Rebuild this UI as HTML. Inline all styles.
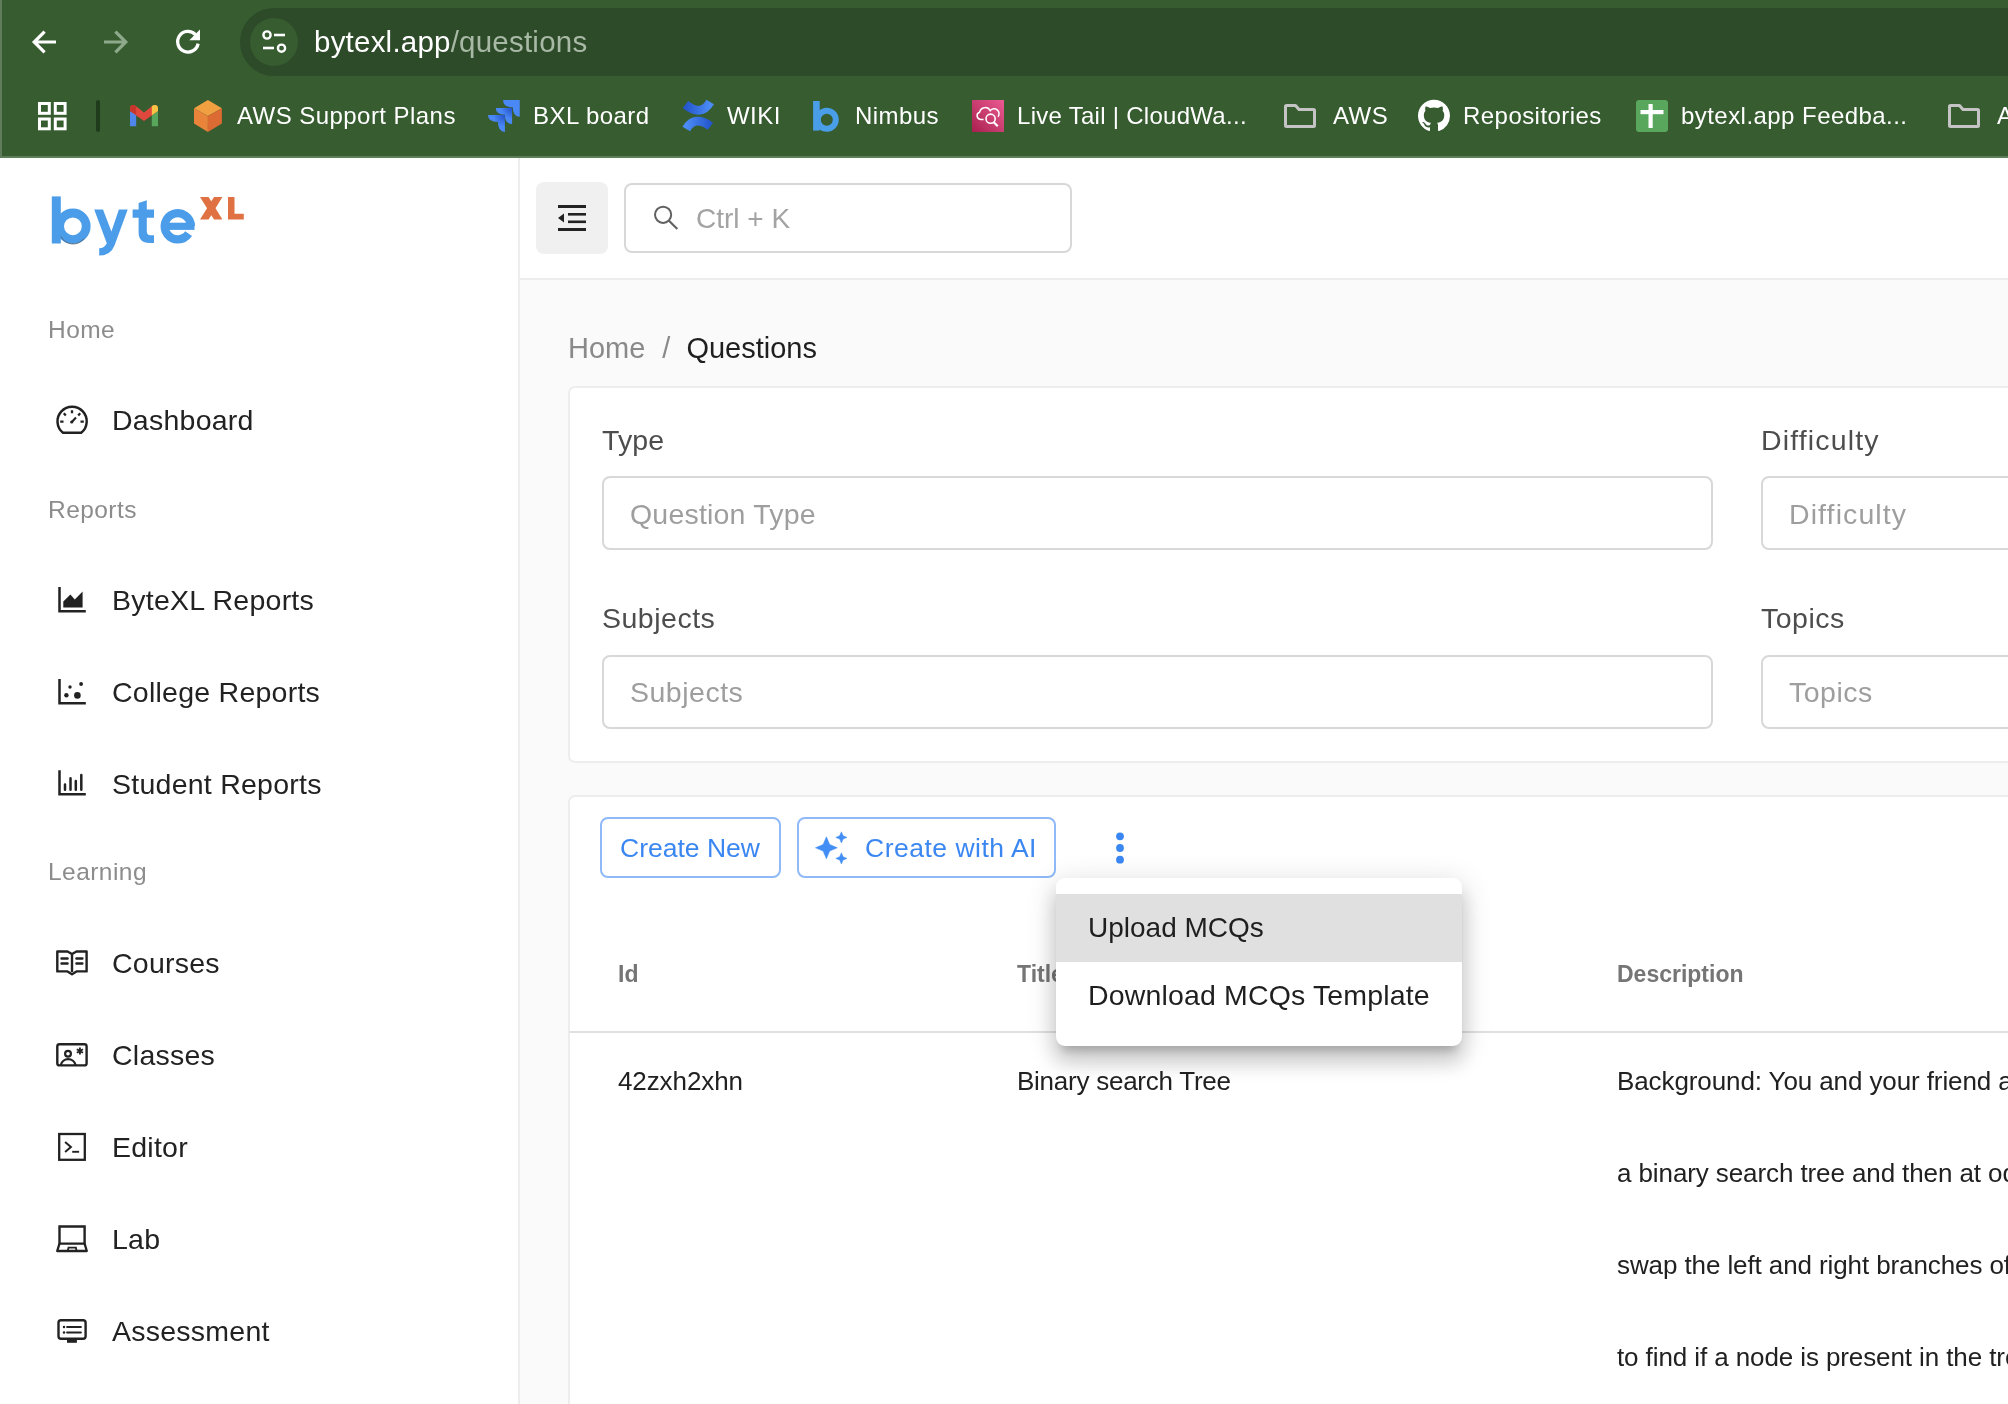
<!DOCTYPE html>
<html><head><meta charset="utf-8">
<style>
html,body{margin:0;padding:0;width:2008px;height:1404px;overflow:hidden;background:#fafafa;font-family:"Liberation Sans",sans-serif;}
.a{position:absolute;}
.t{position:absolute;line-height:1;white-space:nowrap;will-change:transform;}
#chrome{position:absolute;left:0;top:0;width:2008px;height:158px;background:#365c30;}
#chromeline{position:absolute;left:0;top:156px;width:2008px;height:2px;background:#5e7d59;}
#pill{position:absolute;left:240px;top:8px;width:1900px;height:68px;border-radius:34px;background:#2d4a29;}
#siteinfo{position:absolute;left:250px;top:18px;width:48px;height:48px;border-radius:24px;background:#365c30;}
.bm{color:#fff;font-size:24px;letter-spacing:0.45px;}
#sidebar{position:absolute;left:0;top:158px;width:518px;height:1246px;background:#fff;border-right:2px solid #ededed;}
#header{position:absolute;left:520px;top:158px;width:1488px;height:120px;background:#fff;border-bottom:2px solid #ededed;}
.sec{color:#8c8c8c;font-size:24.5px;letter-spacing:0.45px;}
.nav{color:#222;font-size:28.5px;letter-spacing:0.25px;}
.card{position:absolute;background:#fff;border:2px solid #ededed;border-radius:7px;box-sizing:border-box;}
.inp{position:absolute;background:#fff;border:2px solid #d8d8d8;border-radius:8px;box-sizing:border-box;}
.lbl{color:#4d4d4d;font-size:28.5px;letter-spacing:0.5px;}
.ph{color:#9e9e9e;font-size:28.5px;letter-spacing:0.5px;}
.btn{position:absolute;border:2px solid #8fbaf7;border-radius:8px;box-sizing:border-box;background:#fff;}
.btxt{color:#3b87f2;font-size:26.5px;}
.th{color:#757575;font-size:23px;font-weight:700;}
.td{color:#212121;font-size:26px;letter-spacing:-0.1px;}
</style></head><body>

<!-- browser chrome -->
<div id="chrome"></div>
<div id="chromeline"></div><div class="a" style="left:0;top:0;width:2px;height:158px;background:#5f7d5a;"></div>
<div id="pill"></div>
<div id="siteinfo"></div>

<svg class="a" style="left:0;top:0" width="2008" height="157" viewBox="0 0 2008 157">
  <!-- back -->
  <path d="M44.6 31.6 L34.2 42 L44.6 52.4 M35 42 H56" fill="none" stroke="#fff" stroke-width="3.2" stroke-linecap="butt" stroke-linejoin="miter"/>
  <!-- forward -->
  <path d="M115.4 31.6 L125.8 42 L115.4 52.4 M125 42 H104" fill="none" stroke="#8fa98b" stroke-width="3.2" stroke-linecap="butt" stroke-linejoin="miter"/>
  <!-- reload -->
  <path d="M195.4 34.6 A10.3 10.3 0 1 0 198.1 43.6" fill="none" stroke="#fff" stroke-width="3.3"/>
  <path d="M200 29.5 V40.2 H189.3 Z" fill="#fff"/>
  <!-- tune icon -->
  <circle cx="267" cy="35" r="3.6" fill="none" stroke="#fff" stroke-width="2.4"/>
  <path d="M274 35 H285" stroke="#fff" stroke-width="2.6"/>
  <path d="M263 48 H274" stroke="#fff" stroke-width="2.6"/>
  <circle cx="281.5" cy="48.2" r="3.6" fill="none" stroke="#fff" stroke-width="2.4"/>
  <!-- apps grid -->
  <g fill="none" stroke="#fff" stroke-width="3">
    <rect x="39.5" y="103.5" width="9.8" height="9.8"/>
    <rect x="55.3" y="103.5" width="9.8" height="9.8"/>
    <rect x="39.5" y="119" width="9.8" height="9.8"/>
    <rect x="55.3" y="119" width="9.8" height="9.8"/>
  </g>
  <!-- separator -->
  <rect x="96" y="100" width="4" height="32" rx="2" fill="#1f3b1c"/>
  <!-- gmail -->
  <g>
    <path d="M130 111 V126.2 H136.2 V114.5 Z" fill="#4f86ec"/>
    <path d="M151.8 114.5 V126.2 H158 V111 Z" fill="#58a55c"/>
    <path d="M130 108.5 Q130 105 133 105 Q135 105 136.5 106.5 L144 112.5 L151.5 106.5 Q153 105 155 105 Q158 105 158 108.5 V111 L144 121 L130 111 Z" fill="#e0483e"/>
    <path d="M130 108.5 Q130 105 133 105 Q135 105 136.2 106.3 V115 L130 111 Z" fill="#c5372c"/>
    <path d="M151.8 106.3 Q153 105 155 105 Q158 105 158 108.5 V111 L151.8 115.2 Z" fill="#f6c443"/>
  </g>
  <!-- aws cube -->
  <path d="M207.9 100 L221.9 108.2 L207.9 116 L194 108.2 Z" fill="#f0a041"/>
  <path d="M194 108.2 L207.9 116 V132 L194 123.5 Z" fill="#e9843a"/>
  <path d="M221.9 108.2 V123.5 L207.9 132 V116 Z" fill="#dc6a33"/>
  <!-- jira -->
  <defs>
    <radialGradient id="jg" cx="1" cy="0" r="1"><stop offset="0" stop-color="#2150c8"/><stop offset="0.7" stop-color="#4a88f5"/></radialGradient>
    <linearGradient id="cg" x1="0" y1="0" x2="1" y2="0"><stop offset="0" stop-color="#2456cc"/><stop offset="1" stop-color="#4b8cf6"/></linearGradient>
    <linearGradient id="cg2" x1="1" y1="0" x2="0" y2="0"><stop offset="0" stop-color="#2456cc"/><stop offset="1" stop-color="#4b8cf6"/></linearGradient>
    <linearGradient id="lt" x1="0" y1="1" x2="1" y2="0"><stop offset="0" stop-color="#a8214f"/><stop offset="1" stop-color="#ec5a92"/></linearGradient>
  </defs>
  <path d="M503.1 100 H519.75 V116.8 Q512.8 116.8 512.8 107.25 Q503.1 107.25 503.1 100 Z" fill="#4a88f5"/>
  <path d="M495.8 108 H512.1 V124.1 Q504.9 124.1 504.9 114.8 Q495.8 114.8 495.8 108 Z" fill="url(#jg)"/>
  <path d="M488 115.1 H504.9 V131.9 Q498 131.9 498 122.1 Q488 122.1 488 115.1 Z" fill="url(#jg)"/>
  <!-- confluence -->
  <path d="M685.5 104.5 Q701 117.2 710.2 102" fill="none" stroke="url(#cg)" stroke-width="8.8"/>
  <path d="M686.3 129 Q694.6 114.7 710.5 126.2" fill="none" stroke="url(#cg2)" stroke-width="8.8"/>
  <!-- nimbus b -->
  <rect x="813.1" y="101" width="6.6" height="29.6" fill="#4a9ee8"/>
  <circle cx="826.8" cy="119.7" r="9" fill="none" stroke="#4a9ee8" stroke-width="6"/>
  <!-- live tail -->
  <rect x="972" y="100" width="32" height="32" fill="url(#lt)"/>
  <path d="M983.6 119.4 H980.6 A3.7 3.7 0 0 1 979.6 112.2 A5.7 5.7 0 0 1 990.2 110.6 A4.4 4.4 0 0 1 998 116.8" fill="none" stroke="#fff" stroke-width="1.5"/>
  <circle cx="990.6" cy="118.7" r="4.6" fill="none" stroke="#fff" stroke-width="1.6"/>
  <path d="M993.8 122.3 L997.8 126.3" stroke="#fff" stroke-width="2.2"/>
  <!-- folder -->
  <path d="M1285.5 106.5 Q1285.5 105.5 1286.5 105.5 H1295.5 L1299 109.5 H1313.5 Q1314.5 109.5 1314.5 110.5 V125.5 Q1314.5 126.5 1313.5 126.5 H1286.5 Q1285.5 126.5 1285.5 125.5 Z" fill="none" stroke="#c4c4c4" stroke-width="3" stroke-linejoin="round"/>
  <!-- github -->
  <g transform="translate(1418,99.8) scale(2)"><path fill="#fff" d="M8 0C3.58 0 0 3.58 0 8c0 3.54 2.29 6.53 5.47 7.59.4.07.55-.17.55-.38 0-.19-.01-.82-.01-1.49-2.01.37-2.530-.49-2.69-.94-.09-.23-.48-.94-.82-1.130-.28-.15-.68-.52-.01-.53.63-.01 1.08.58 1.23.82.72 1.21 1.870.87 2.33.66.07-.52.28-.87.51-1.07-1.78-.2-3.64-.89-3.64-3.95 0-.87.31-1.59.82-2.15-.08-.2-.36-1.02.08-2.12 0 0 .67-.21 2.2.82.64-.18 1.32-.27 2-.27.68 0 1.36.09 2 .27 1.53-1.04 2.2-.82 2.2-.82.44 1.1.16 1.92.08 2.12.51.56.82 1.27.82 2.15 0 3.07-1.87 3.75-3.65 3.95.29.25.54.73.54 1.48 0 1.07-.01 1.930-.01 2.2 0 .21.15.46.55.38A8.013 8.013 0 0016 8c0-4.42-3.58-8-8-8z"/></g>
  <!-- feedback -->
  <rect x="1636" y="100" width="32" height="32" rx="3" fill="#58a75d"/>
  <rect x="1640.5" y="110" width="23" height="4.2" fill="#fff"/>
  <rect x="1648.5" y="104" width="4.2" height="24" fill="#fff"/>
  <!-- folder 2 -->
  <path d="M1949.5 106.5 Q1949.5 105.5 1950.5 105.5 H1959.5 L1963 109.5 H1977.5 Q1978.5 109.5 1978.5 110.5 V125.5 Q1978.5 126.5 1977.5 126.5 H1950.5 Q1949.5 126.5 1949.5 125.5 Z" fill="none" stroke="#c4c4c4" stroke-width="3" stroke-linejoin="round"/>
</svg>
<div class="t" style="left:314px;top:27px;font-size:29.5px;letter-spacing:0.22px;color:#fff;">bytexl.app<span style="color:#a8b9a5">/questions</span></div>

<div class="t bm" style="left:236.5px;top:104px;">AWS Support Plans</div>
<div class="t bm" style="left:532.5px;top:104px;">BXL board</div>
<div class="t bm" style="left:726.5px;top:104px;">WIKI</div>
<div class="t bm" style="left:854.5px;top:104px;">Nimbus</div>
<div class="t bm" style="left:1016.5px;top:104px;letter-spacing:0.28px;">Live Tail | CloudWa...</div>
<div class="t bm" style="left:1332.5px;top:104px;">AWS</div>
<div class="t bm" style="left:1462.5px;top:104px;">Repositories</div>
<div class="t bm" style="left:1680.5px;top:104px;">bytexl.app Feedba...</div>
<div class="t bm" style="left:1996.5px;top:104px;">AWS</div>

<!-- sidebar -->
<div id="sidebar"></div>
<div id="header"></div>


<svg class="a" style="left:0;top:157px" width="520" height="1247" viewBox="0 157 520 1247">
  <!-- logo -->
  <g fill="#4b9de9">
    <rect x="51.8" y="196.4" width="9" height="47.1"/>
    <path d="M94.2 209.6 H103 L111.4 231.5 L118.9 209.6 H127.7 L114.5 245.5 Q110.6 255.6 99.2 255.6 V248.2 Q104.6 248.2 106.8 243.2 Z"/>
    <path d="M138.6 203 L146.8 200.3 V209.6 H154 V217.8 H146.8 V231 Q146.8 235.3 150.5 235.3 H154 V243 H149.5 Q138.6 243 138.6 232 V217.8 H132.6 V209.6 H138.6 Z"/>
    <rect x="161.2" y="222.7" width="33.3" height="7.2"/>
  </g>
  <circle cx="72.9" cy="226.3" r="13.3" fill="none" stroke="#4b9de9" stroke-width="8.8"/>
  <path d="M61 236.5 A13.5 13.5 0 0 0 84 238.5" fill="none" stroke="#555" stroke-width="0.9" opacity="0.8"/>
  <path d="M190.9 226.1 A13.1 13.1 0 1 0 188.6 233.7" fill="none" stroke="#4b9de9" stroke-width="8.3"/>
  <g fill="#e07142">
    <path d="M200 197 H208.6 L222.4 219.4 H214 Z"/>
    <path d="M214 197 H222.4 L208.6 219.4 H200 Z"/>
    <path d="M228 197 H234.5 V213.8 H243.8 V219.4 H228 Z"/>
  </g>
  <g fill="none" stroke="#222" stroke-width="2.5">
    <!-- dashboard -->
    <path d="M63 432.8 A14.6 14.6 0 1 1 81.2 432.8 Z" stroke-linejoin="round"/>
    <path d="M72 410.2 V413.3 M60.2 421.6 H63.5 M80.5 421.6 H83.8 M63.8 413.3 L65.8 415.5 M80.2 413.3 L78.2 415.5" stroke-width="2.3"/>
    <path d="M71.8 421.9 L76 417.6" stroke-width="2.2"/>
    <circle cx="71.7" cy="422" r="1.6" fill="#222" stroke="none"/>
    <!-- bytexl area -->
    <path d="M59.5 587 V611.2 H85.8"/>
    <!-- college -->
    <path d="M59.5 679 V703.2 H85.8"/>
    <!-- student -->
    <path d="M59.5 770.3 V794.3 H85.8"/>
    <path d="M65 784.5 V789.8 M70.5 778.2 V789.8 M75.8 781.1 V789.8 M81.3 775.1 V789.8" stroke-width="2.5" stroke-linecap="round"/>
    <!-- courses -->
    <path d="M57.3 951.5 H67.5 L72 954 L76.5 951.5 H86.6 V971.4 H76.5 L72 974.2 L67.5 971.4 H57.3 Z" stroke-width="2.4" stroke-linejoin="round"/>
    <path d="M72 954 V972" stroke-width="2.4"/>
    <path d="M61.5 958.5 H67.6 M61.5 963.5 H67.6 M76.4 958.5 H82.4 M76.4 963.5 H82.4" stroke-width="2.4" stroke-linecap="round"/>
    <!-- classes -->
    <rect x="57.3" y="1044.2" width="29.3" height="21.2" rx="2.2" stroke-width="2.4"/>
    <circle cx="68" cy="1053.7" r="2.9" stroke-width="2.2"/>
    <path d="M60.8 1065 A7.6 7.6 0 0 1 75.6 1065" stroke-width="2.3"/>
    <path d="M79.9 1047.4 V1054.6 M76.8 1049.2 L83 1052.8 M83 1049.2 L76.8 1052.8" stroke-width="1.9"/>
    <!-- editor -->
    <rect x="59.2" y="1134" width="25.6" height="25.8" stroke-width="2.3"/>
    <path d="M65.1 1142 L70.9 1146.9 L65.1 1151.9" stroke-width="2"/>
    <path d="M72.2 1151.8 H79.1" stroke-width="1.9"/>
    <!-- lab -->
    <path d="M59.5 1243.6 V1226.5 H84.6 V1243.6 Z" stroke-width="2.4"/>
    <path d="M59.5 1243.6 L57.2 1251 H86.8 L84.6 1243.6" stroke-width="2.3" stroke-linejoin="round"/>
    <path d="M67.7 1251 L68.5 1247.6 H75.9 L76.6 1251" stroke-width="1.8"/>
    <!-- assessment -->
    <rect x="58.5" y="1320.3" width="27.1" height="18.4" rx="2.5" stroke-width="2.4"/>
    <path d="M67.1 1327 H80.9 M67.1 1332.4 H80.9" stroke-width="2" stroke-linecap="round"/>
  </g>
  <g fill="#222">
    <path d="M63.3 601.4 L70.4 594.5 L74.8 599.4 L82.6 591.4 V607.5 H63.3 Z"/>
    <circle cx="66.4" cy="695.2" r="2.2"/>
    <circle cx="77.4" cy="695.4" r="3.3"/>
    <circle cx="70" cy="687" r="1.7"/>
    <circle cx="81.1" cy="684" r="1.9"/>
    <circle cx="64" cy="1327" r="1.25"/>
    <circle cx="64" cy="1332.4" r="1.25"/>
    <rect x="67" y="1339.4" width="9.9" height="3.4"/>
  </g>
</svg>


<div class="t sec" style="left:48px;top:318px;">Home</div>
<div class="t nav" style="left:112px;top:406px;">Dashboard</div>
<div class="t sec" style="left:48px;top:498px;">Reports</div>
<div class="t nav" style="left:112px;top:586px;">ByteXL Reports</div>
<div class="t nav" style="left:112px;top:678px;">College Reports</div>
<div class="t nav" style="left:112px;top:770px;">Student Reports</div>
<div class="t sec" style="left:48px;top:860px;">Learning</div>
<div class="t nav" style="left:112px;top:949px;">Courses</div>
<div class="t nav" style="left:112px;top:1041px;">Classes</div>
<div class="t nav" style="left:112px;top:1133px;">Editor</div>
<div class="t nav" style="left:112px;top:1225px;">Lab</div>
<div class="t nav" style="left:112px;top:1317px;">Assessment</div>

<!-- header -->
<div class="a" style="left:536px;top:182px;width:72px;height:72px;border-radius:8px;background:#f0f0f0;"></div>
<div class="inp" style="left:624px;top:183px;width:448px;height:70px;"></div>
<div class="t" style="left:696px;top:205px;font-size:28px;color:#a3a3a3;">Ctrl + K</div>

<!-- breadcrumb -->
<div class="t" style="left:568px;top:334px;font-size:29px;color:#8a8a8a;">Home<span style="display:inline-block;width:17px"></span>/<span style="display:inline-block;width:16px"></span><span style="color:#1f1f1f">Questions</span></div>

<!-- filter card -->
<div class="card" style="left:568px;top:386px;width:1600px;height:377px;"></div>
<div class="t lbl" style="left:602px;top:426px;letter-spacing:0.1px;">Type</div>
<div class="t lbl" style="left:1761px;top:426px;letter-spacing:1.15px;">Difficulty</div>
<div class="inp" style="left:602px;top:476px;width:1111px;height:74px;"></div>
<div class="inp" style="left:1761px;top:476px;width:400px;height:74px;"></div>
<div class="t ph" style="left:630px;top:500px;letter-spacing:0.2px;">Question Type</div>
<div class="t ph" style="left:1789px;top:500px;letter-spacing:1.1px;">Difficulty</div>
<div class="t lbl" style="left:602px;top:604px;">Subjects</div>
<div class="t lbl" style="left:1761px;top:604px;">Topics</div>
<div class="inp" style="left:602px;top:655px;width:1111px;height:74px;"></div>
<div class="inp" style="left:1761px;top:655px;width:400px;height:74px;"></div>
<div class="t ph" style="left:630px;top:678px;">Subjects</div>
<div class="t ph" style="left:1789px;top:678px;">Topics</div>

<!-- table card -->
<div class="card" style="left:568px;top:795px;width:1600px;height:700px;"></div>
<div class="btn" style="left:600px;top:817px;width:181px;height:61px;"></div>
<div class="t btxt" style="left:620px;top:835px;">Create New</div>
<div class="btn" style="left:797px;top:817px;width:259px;height:61px;"></div>
<div class="t btxt" style="left:865px;top:835px;letter-spacing:0.5px;">Create with AI</div>

<div class="t th" style="left:618px;top:963px;">Id</div>
<div class="t th" style="left:1017px;top:963px;">Title</div>
<div class="t th" style="left:1617px;top:963px;">Description</div>
<div class="a" style="left:570px;top:1031px;width:1438px;height:2px;background:#e0e0e0;"></div>
<div class="t td" style="left:618px;top:1068px;">42zxh2xhn</div>
<div class="t td" style="left:1017px;top:1068px;letter-spacing:-0.25px;">Binary search Tree</div>
<div class="t td" style="left:1617px;top:1068px;">Background: You and your friend are working on a problem</div>
<div class="t td" style="left:1617px;top:1160px;">a binary search tree and then at odd levels</div>
<div class="t td" style="left:1617px;top:1252px;">swap the left and right branches of the tree</div>
<div class="t td" style="left:1617px;top:1344px;">to find if a node is present in the tree</div>

<svg class="a" style="left:520px;top:157px" width="1488" height="1247" viewBox="520 157 1488 1247">
  <!-- menu toggle -->
  <g fill="#222">
    <rect x="558" y="205" width="28" height="3"/>
    <rect x="568" y="213" width="18" height="2.6"/>
    <rect x="568" y="220.5" width="18" height="2.6"/>
    <rect x="558" y="228" width="28" height="3"/>
    <path d="M558 218 L564 213.5 V222.6 Z"/>
  </g>
  <!-- search -->
  <circle cx="663.1" cy="214.8" r="8.1" fill="none" stroke="#616161" stroke-width="2"/>
  <path d="M669 220.7 L677.3 229.1" stroke="#616161" stroke-width="2.1"/>
  <!-- sparkles -->
  <g fill="#438ef5" stroke="#438ef5" stroke-width="0.5" stroke-linejoin="round">
    <polygon points="826.40,836.80 829.70,844.50 837.40,847.80 829.70,851.10 826.40,858.80 823.10,851.10 815.40,847.80 823.10,844.50"/>
    <polygon points="841.40,831.80 843.10,835.70 847.00,837.40 843.10,839.10 841.40,843.00 839.70,839.10 835.80,837.40 839.70,835.70"/>
    <polygon points="841.40,852.80 843.10,856.70 847.00,858.40 843.10,860.10 841.40,864.00 839.70,860.10 835.80,858.40 839.70,856.70"/>
  </g>
  <!-- kebab -->
  <g fill="#3b87f2">
    <circle cx="1120" cy="836.3" r="3.9"/>
    <circle cx="1120" cy="848" r="3.9"/>
    <circle cx="1120" cy="859.7" r="3.9"/>
  </g>
</svg>
<!-- dropdown menu -->
<div class="a" style="left:1056px;top:878px;width:406px;height:168px;background:#fff;border-radius:9px;box-shadow:0 10px 10px -6px rgba(0,0,0,.2),0 16px 20px 2px rgba(0,0,0,.14),0 6px 28px 4px rgba(0,0,0,.12);overflow:hidden;">
  <div class="a" style="left:0;top:16px;width:406px;height:68px;background:#e0e0e0;"></div>
</div>
<div class="t" style="left:1088px;top:914px;font-size:28px;color:#1f1f1f;">Upload MCQs</div>
<div class="t" style="left:1088px;top:981px;font-size:28.5px;letter-spacing:0.15px;color:#1f1f1f;">Download MCQs Template</div>

</body></html>
